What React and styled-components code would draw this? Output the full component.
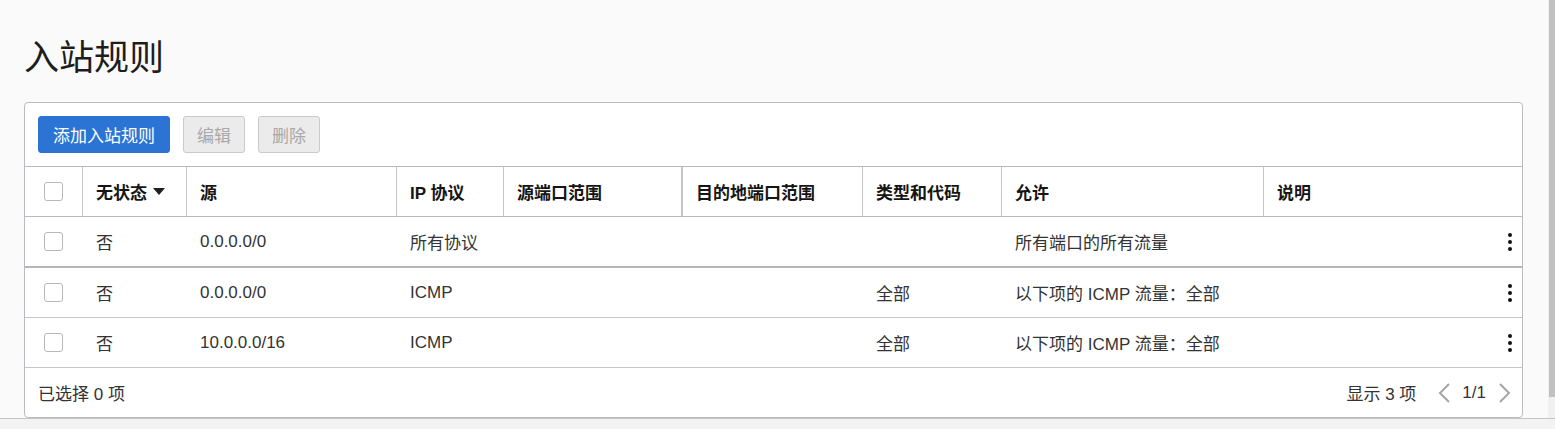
import React from "react";
import styled, { createGlobalStyle } from "styled-components";

const Global = createGlobalStyle`
  *, *::before, *::after { box-sizing: border-box; }
  html, body { margin: 0; padding: 0; }
  body {
    font-family: "Liberation Sans", "Noto Sans CJK SC", sans-serif;
    background: #fafafa;
    overflow: hidden;
  }
`;

const Viewport = styled.div`
  display: grid;
  grid-template-rows: 418px 11px;
  width: 1555px;
  height: 429px;
`;

const TopArea = styled.div`
  display: flex;
  min-height: 0;
`;

const Main = styled.main`
  flex: 1;
  padding: 0 25px 0 24px;
  background: #fafafa;
  display: flex;
  flex-direction: column;
  min-height: 0;
  overflow: hidden;
`;

const VScroll = styled.div`
  width: 7px;
  background: #f1f1f1;
  display: flex;
  justify-content: flex-end;
`;

const VThumb = styled.div`
  width: 6px;
  height: 397px;
  background: #c1c1c1;
`;

const HStrip = styled.div`
  border-top: 1px solid #c4c4c4;
  background: #f3f3f3;
`;

const Title = styled.h1`
  margin: 37px 0 24px;
  font-size: 35px;
  line-height: 41px;
  font-weight: 400;
  color: #1d1d1d;
`;

const Card = styled.section`
  flex: 1;
  background: #fff;
  border: 1px solid #b8bbbf;
  border-radius: 4px;
  display: flex;
  flex-direction: column;
  min-height: 0;
`;

const Toolbar = styled.div`
  height: 64px;
  padding: 13px 13px 0;
  display: flex;
  gap: 13px;
  align-items: flex-start;
  border-bottom: 1px solid #b8bbbf;
`;

const Button = styled.button`
  height: 37px;
  padding: 0 ${(p) => (p.$primary ? "14px" : "13px")};
  font-family: inherit;
  font-size: 17px;
  border-radius: 3px;
  border: 1px solid ${(p) => (p.$primary ? "#2b74d4" : "#c9cacc")};
  background: ${(p) => (p.$primary ? "#2b74d4" : "#ebebeb")};
  color: ${(p) => (p.$primary ? "#fff" : "#a9a9a9")};
  cursor: ${(p) => (p.$primary ? "pointer" : "default")};
`;

const cols = "58px 104px 210px 107px 179px 180px 139px 262px 1fr";

const HeaderRow = styled.div`
  display: grid;
  grid-template-columns: ${cols};
  height: 50px;
  border-bottom: 1px solid #b8bbbf;
`;

const HeadCell = styled.div`
  display: flex;
  align-items: center;
  padding-left: ${(p) => (p.$check ? "19px" : "13px")};
  border-right: ${(p) => (p.$last ? "none" : `${p.$thick ? 2 : 1}px solid #c3c5c8`)};
  font-size: 17px;
  font-weight: 700;
  color: #161513;
  white-space: nowrap;
`;

const Row = styled.div`
  display: grid;
  grid-template-columns: ${cols};
  height: ${(p) => (p.$thick ? "51px" : "50px")};
  border-bottom: ${(p) => (p.$thick ? "2px solid #b4b6b9" : "1px solid #c3c5c8")};
`;

const Cell = styled.div`
  display: flex;
  align-items: center;
  padding-left: ${(p) => (p.$check ? "19px" : "13px")};
  padding-right: ${(p) => (p.$actions ? "10px" : "0")};
  justify-content: ${(p) => (p.$actions ? "flex-end" : "flex-start")};
  font-size: 17px;
  color: #333;
  white-space: nowrap;
`;

const Checkbox = styled.span`
  display: inline-block;
  width: 19px;
  height: 19px;
  border: 1px solid #b7b8ba;
  border-radius: 3px;
  background: #fff;
`;

const Caret = styled.span`
  display: inline-block;
  margin-left: 6px;
  width: 0;
  height: 0;
  border-left: 6px solid transparent;
  border-right: 6px solid transparent;
  border-top: 7px solid #1f1f1f;
`;

const Kebab = styled.span`
  display: inline-flex;
  flex-direction: column;
  gap: 3px;
  & > i {
    display: block;
    width: 4px;
    height: 4px;
    border-radius: 50%;
    background: #111;
  }
`;

const Footer = styled.div`
  flex: 1;
  display: flex;
  align-items: center;
  justify-content: space-between;
  padding: 0 10px 0 13px;
  font-size: 17px;
  color: #333;
`;

const Pager = styled.div`
  display: flex;
  align-items: center;
`;

const PagerCount = styled.span`
  margin-right: 21px;
`;

const PageNum = styled.span`
  margin: 0 12px 0 11px;
`;

const Chevron = ({ dir }) => (
  <svg width="14" height="22" viewBox="0 0 14 22" fill="none">
    <polyline
      points={dir === "left" ? "12,2 3,11 12,20" : "2,2 11,11 2,20"}
      stroke="#a5a5a5"
      strokeWidth="2"
    />
  </svg>
);

const headers = ["无状态", "源", "IP 协议", "源端口范围", "目的地端口范围", "类型和代码", "允许", "说明"];

const rows = [
  { state: "否", src: "0.0.0.0/0", proto: "所有协议", type: "", allow: "所有端口的所有流量" },
  { state: "否", src: "0.0.0.0/0", proto: "ICMP", type: "全部", allow: "以下项的 ICMP 流量：全部" },
  { state: "否", src: "10.0.0.0/16", proto: "ICMP", type: "全部", allow: "以下项的 ICMP 流量：全部" },
];

export default function App() {
  return (
    <>
      <Global />
      <Viewport>
        <TopArea>
          <Main>
            <Title>入站规则</Title>
            <Card>
              <Toolbar>
                <Button $primary>添加入站规则</Button>
                <Button disabled>编辑</Button>
                <Button disabled>删除</Button>
              </Toolbar>
              <HeaderRow>
                <HeadCell $check>
                  <Checkbox />
                </HeadCell>
                {headers.map((h, i) => (
                  <HeadCell key={h} $thick={i === 3} $last={i === headers.length - 1}>
                    {h}
                    {i === 0 && <Caret />}
                  </HeadCell>
                ))}
              </HeaderRow>
              {rows.map((r, i) => (
                <Row key={i} $thick={i === 0}>
                  <Cell $check>
                    <Checkbox />
                  </Cell>
                  <Cell>{r.state}</Cell>
                  <Cell>{r.src}</Cell>
                  <Cell>{r.proto}</Cell>
                  <Cell />
                  <Cell />
                  <Cell>{r.type}</Cell>
                  <Cell>{r.allow}</Cell>
                  <Cell $actions>
                    <Kebab>
                      <i />
                      <i />
                      <i />
                    </Kebab>
                  </Cell>
                </Row>
              ))}
              <Footer>
                <span>已选择 0 项</span>
                <Pager>
                  <PagerCount>显示 3 项</PagerCount>
                  <Chevron dir="left" />
                  <PageNum>1/1</PageNum>
                  <Chevron dir="right" />
                </Pager>
              </Footer>
            </Card>
          </Main>
          <VScroll>
            <VThumb />
          </VScroll>
        </TopArea>
        <HStrip />
      </Viewport>
    </>
  );
}
